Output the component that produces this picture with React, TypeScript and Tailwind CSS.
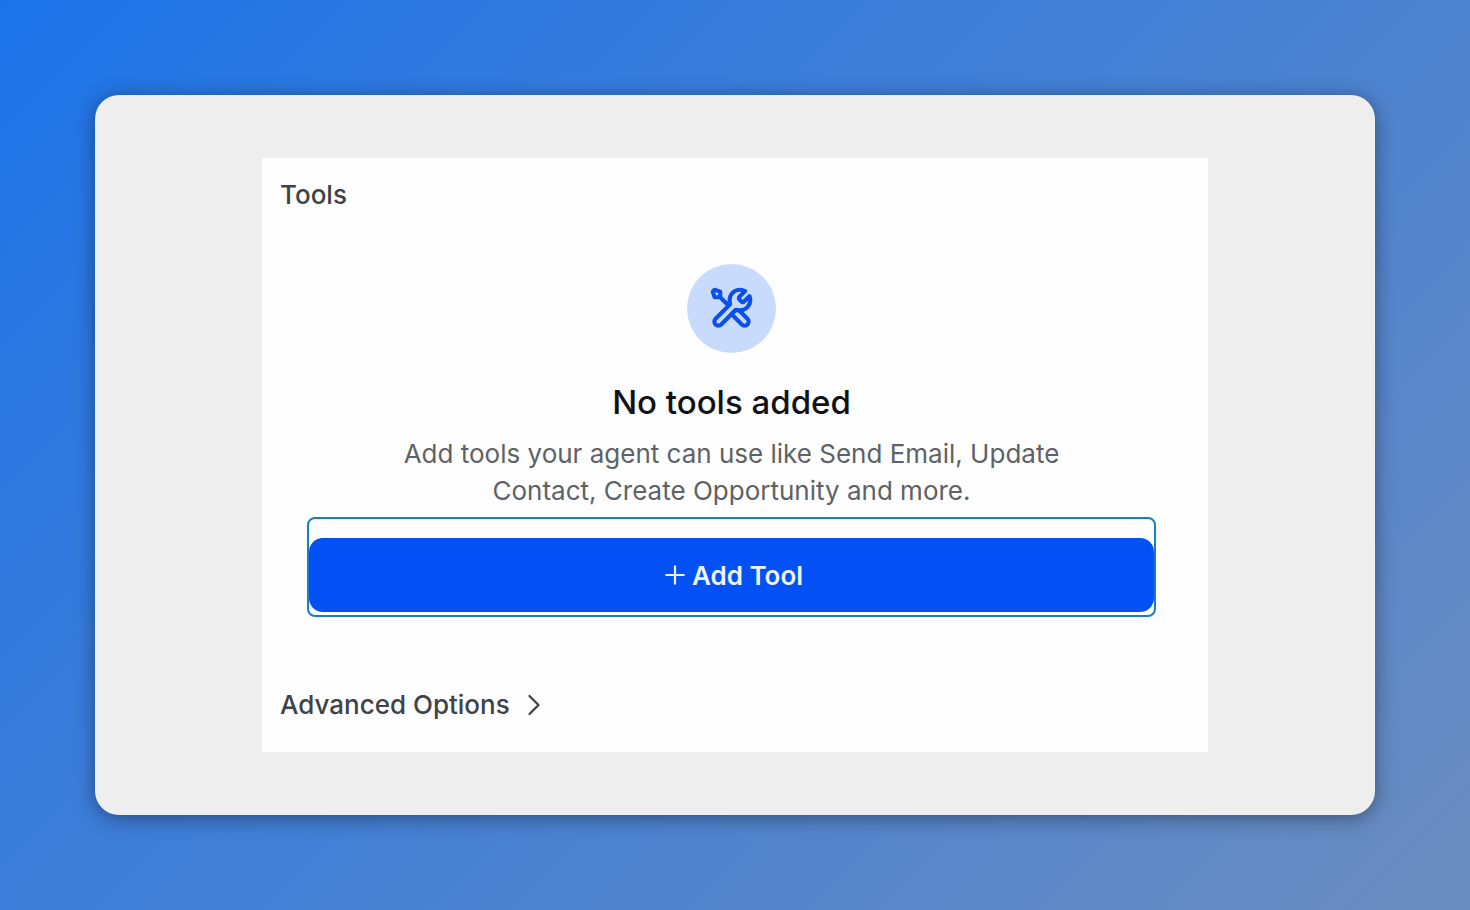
import { ChevronRight, Plus } from "lucide-react";

function ToolsIcon() {
  return (
    <svg
      viewBox="0 0 24 24"
      fill="none"
      stroke="currentColor"
      strokeWidth={2.2}
      strokeLinecap="round"
      strokeLinejoin="round"
      className="size-[45px]"
      aria-hidden="true"
    >
      <path d="M6 6L10.5 10.5M6 6H3L2 3L3 2L6 3V6ZM19.259 2.741L16.6314 5.3686C16.2354 5.7646 16.0373 5.9626 15.9632 6.191C15.8979 6.3918 15.8979 6.6082 15.9632 6.809C16.0373 7.0374 16.2354 7.2354 16.6314 7.6314L16.8686 7.8686C17.2646 8.2646 17.4627 8.4626 17.691 8.5368C17.8918 8.6021 18.1082 8.6021 18.309 8.5368C18.5373 8.4626 18.7354 8.2646 19.1314 7.8686L21.5893 5.4107C21.854 6.0549 22 6.7604 22 7.5C22 10.5376 19.5376 13 16.5 13C16.1338 13 15.7759 12.9642 15.4298 12.8959C14.9436 12.8001 14.7005 12.7521 14.5532 12.7668C14.3965 12.7824 14.3193 12.8059 14.1805 12.8802C14.0499 12.9501 13.919 13.081 13.657 13.343L6.5 20.5C5.6716 21.3284 4.3284 21.3284 3.5 20.5C2.6716 19.6716 2.6716 18.3284 3.5 17.5L10.657 10.343C10.919 10.081 11.0499 9.95 11.1198 9.8195C11.1941 9.6807 11.2176 9.6035 11.2332 9.4468C11.2479 9.2995 11.1999 9.0564 11.1041 8.5702C11.0358 8.2241 11 7.8662 11 7.5C11 4.4624 13.4624 2 16.5 2C17.5055 2 18.448 2.2698 19.259 2.741Z" />
      <path d="M12 15L17.5 20.5C18.3284 21.3283 19.6716 21.3283 20.5 20.5C21.3284 19.6715 21.3284 18.3283 20.5 17.5L15.9753 12.9753C15.655 12.945 15.3427 12.8872 15.0408 12.8043C14.6517 12.6975 14.2249 12.7751 13.9421 13.0579L12 15Z" />
    </svg>
  );
}

function EmptyState() {
  return (
    <div className="mt-[50px] mr-[52px] ml-[45px] flex flex-col items-center text-center">
      <div className="flex size-[89px] items-center justify-center rounded-full bg-[#c9dbfd] text-[#0b50ea]">
        <ToolsIcon />
      </div>
      <h3 className="mt-7 text-[33px] leading-[42px] font-medium text-[#101215]">
        No tools added
      </h3>
      <p className="mt-3 max-w-[700px] text-[26px] leading-[37px] text-[#5d6266]">
        Add tools your agent can use like Send Email, Update Contact, Create
        Opportunity and more.
      </p>
      <div className="mt-2 w-full rounded-lg border-2 border-[#1680c4] pt-[19px] pb-[3px]">
        <button
          type="button"
          className="flex h-[74px] w-full items-center justify-center gap-0.5 rounded-[14px] bg-[#0350f5] text-[26px] font-semibold text-[#eef4ff]"
        >
          <Plus className="size-[30px]" strokeWidth={1.75} />
          Add Tool
        </button>
      </div>
    </div>
  );
}

export default function App() {
  return (
    <main className="min-h-screen bg-linear-135 from-[#1a73e8] via-[#4480d4] to-[#6b8cbf] p-[95px] font-[Inter,sans-serif]">
      <div className="flex min-h-[720px] flex-col rounded-3xl bg-[#eeeeee] px-[167px] py-[63px] shadow-[0_3px_20px_rgba(0,0,0,0.4)]">
        <section className="flex flex-1 flex-col bg-[#fefefe] pt-[18px] pb-7 text-[#3f4347]">
          <h2 className="px-[18px] text-[26px] leading-[38px] font-medium">
            Tools
          </h2>
          <EmptyState />
          <button
            type="button"
            className="mt-auto ml-[18px] flex items-center gap-1.5 self-start text-[26px] leading-[38px] font-medium"
          >
            Advanced Options
            <ChevronRight className="size-9" strokeWidth={1.5} />
          </button>
        </section>
      </div>
    </main>
  );
}
